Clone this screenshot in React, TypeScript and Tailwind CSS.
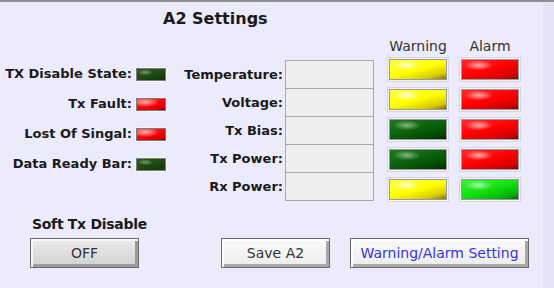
import React from "react";

type LedColor = "yellow" | "red" | "green" | "darkgreen" | "olive";

const ledFill: Record<LedColor, string> = {
  yellow:
    "bg-[radial-gradient(ellipse_14px_5px_at_30%_28%,rgba(255,255,240,0.85),transparent),linear-gradient(165deg,#ffff40_0%,#ffff00_50%,#d8c800_82%,#7a6c00_100%)]",
  red: "bg-[radial-gradient(ellipse_14px_5px_at_30%_28%,rgba(255,190,190,0.9),transparent),linear-gradient(165deg,#ff2a2a_0%,#ff0000_50%,#d40000_82%,#8a0000_100%)]",
  green:
    "bg-[radial-gradient(ellipse_14px_5px_at_30%_28%,rgba(200,255,200,0.8),transparent),linear-gradient(165deg,#3af03a_0%,#12e012_50%,#00b400_82%,#006a00_100%)]",
  darkgreen:
    "bg-[radial-gradient(ellipse_14px_5px_at_30%_28%,rgba(170,210,170,0.75),transparent),linear-gradient(165deg,#1c7a1c_0%,#0b600b_50%,#014801_82%,#002a00_100%)]",
  olive:
    "bg-[radial-gradient(ellipse_8px_3px_at_30%_30%,rgba(150,190,140,0.7),transparent),linear-gradient(165deg,#2c5a1e_0%,#1e4812_55%,#123409_100%)]",
};

function BigLed({ color }: { color: LedColor }) {
  return (
    <div className="h-[25px] w-[62px] border border-[#d6d6e2] bg-[#f3f3f8] p-[1px]">
      <div className={`h-full w-full border border-[#9a9aa0] ${ledFill[color]}`} />
    </div>
  );
}

function SmallLed({ color }: { color: LedColor }) {
  return (
    <div className="h-[15px] w-[32px] bg-[#f6f6fa] p-[1px]">
      <div className={`h-full w-full border border-[#7a7a80] ${ledFill[color]}`} />
    </div>
  );
}

const statusRows: { label: string; color: LedColor }[] = [
  { label: "TX Disable State:", color: "olive" },
  { label: "Tx Fault:", color: "red" },
  { label: "Lost Of Singal:", color: "red" },
  { label: "Data Ready Bar:", color: "olive" },
];

const monitorRows = ["Temperature:", "Voltage:", "Tx Bias:", "Tx Power:", "Rx Power:"];
const warningLeds: LedColor[] = ["yellow", "yellow", "darkgreen", "darkgreen", "yellow"];
const alarmLeds: LedColor[] = ["red", "red", "red", "red", "green"];

export default function App() {
  return (
    <div
      className="flex h-[288px] w-[554px] flex-col overflow-hidden border-t-2 border-[#8e8e94] bg-[#ecebfb] text-[#1a1a1a] shadow-[inset_-11px_0_0_#e4e3f4]"
      style={{ fontFamily: '"DejaVu Sans", Verdana, sans-serif' }}
    >
      <div className="flex h-[34px] items-center pl-[163px] text-[16px] font-bold">A2 Settings</div>

      <div className="flex h-[170px] items-start">
        {/* status indicators */}
        <div className="flex w-[170px] flex-col pr-[3px] pt-[23px]">
          {statusRows.map((r) => (
            <div key={r.label} className="flex h-[30px] items-center justify-end gap-[3px]">
              <span className="whitespace-nowrap text-[13px] font-bold">{r.label}</span>
              <SmallLed color={r.color} />
            </div>
          ))}
        </div>

        {/* readouts */}
        <div className="flex w-[204px] flex-col pt-[24px]">
          {monitorRows.map((m) => (
            <div key={m} className="-mt-px flex h-[29px] items-center first:mt-0">
              <span className="w-[115px] whitespace-nowrap pr-[2px] text-right text-[13px] font-bold">{m}</span>
              <div className="h-full w-[89px] border border-[#a8a8ae] bg-[#eeeeee]" />
            </div>
          ))}
        </div>

        {/* warning */}
        <div className="ml-[13px] flex w-[62px] flex-col">
          <div className="flex h-[21px] items-center justify-center text-[14px] text-[#333]">Warning</div>
          <div className="flex flex-col gap-[5px]">
            {warningLeds.map((c, i) => (
              <BigLed key={i} color={c} />
            ))}
          </div>
        </div>

        {/* alarm */}
        <div className="ml-[10px] flex w-[62px] flex-col">
          <div className="flex h-[21px] items-center justify-center text-[14px] text-[#333]">Alarm</div>
          <div className="flex flex-col gap-[5px]">
            {alarmLeds.map((c, i) => (
              <BigLed key={i} color={c} />
            ))}
          </div>
        </div>
      </div>

      <div className="flex h-[62px] items-end">
        <div className="ml-[30px] flex w-[109px] flex-col">
          <span className="mb-[5px] whitespace-nowrap pl-[2px] text-[14px] font-bold leading-[18px] tracking-[-0.3px]">
            Soft Tx Disable
          </span>
          <button className="h-[30px] w-[109px] border border-[#6a6a6a] bg-[linear-gradient(180deg,#ebebeb,#d2d2d2)] text-[14px] text-[#333] shadow-[inset_2px_2px_0_#f8f8f8,inset_-3px_-3px_0_#9c9c9c]">
            OFF
          </button>
        </div>
        <button className="ml-[82px] h-[30px] w-[109px] border border-[#6a6a6a] bg-[linear-gradient(180deg,#fafafa,#ececec)] text-[14px] text-[#333] shadow-[inset_2px_2px_0_#ffffff,inset_-3px_-3px_0_#a8a8a8]">
          Save A2
        </button>
        <button className="ml-[20px] h-[30px] w-[179px] whitespace-nowrap border border-[#6a6a6a] bg-[linear-gradient(180deg,#fafafa,#ececec)] text-[14px] text-[#3434e0] shadow-[inset_2px_2px_0_#ffffff,inset_-3px_-3px_0_#a8a8a8]">
          Warning/Alarm Setting
        </button>
      </div>
    </div>
  );
}
